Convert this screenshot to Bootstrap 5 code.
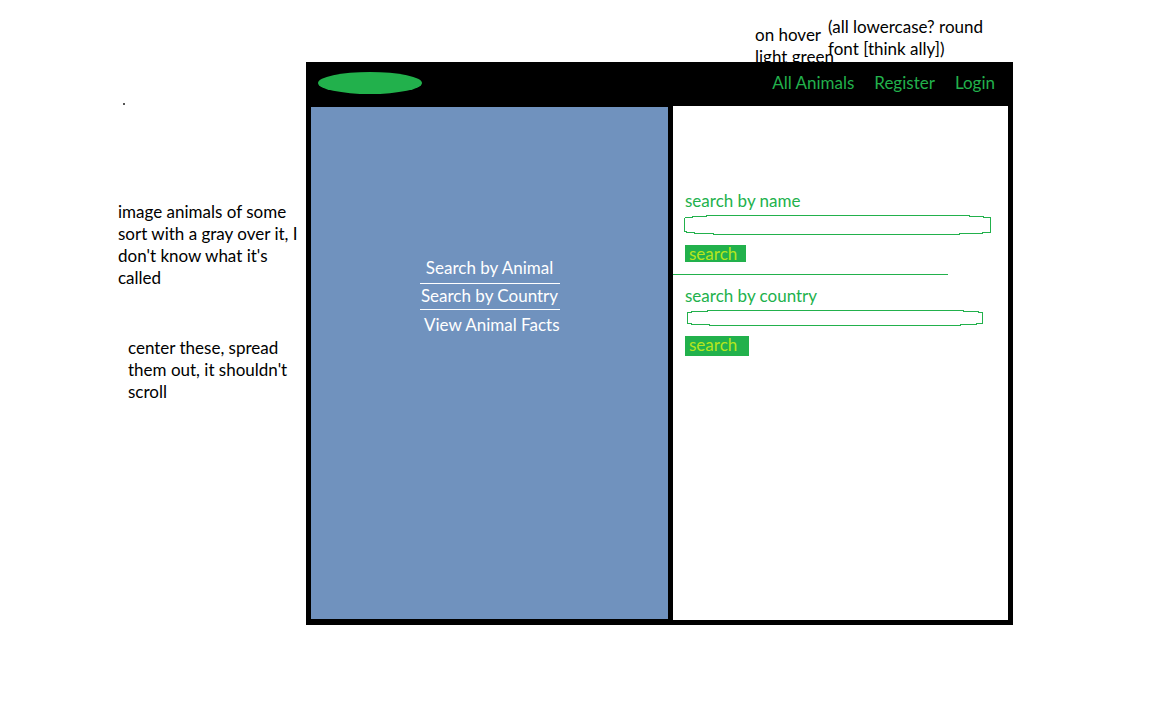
<!DOCTYPE html>
<html lang="en">
<head>
<meta charset="utf-8">
<meta name="viewport" content="width=device-width, initial-scale=1">
<title>Animal search wireframe</title>
<link href="https://cdn.jsdelivr.net/npm/bootstrap@5.3.0/dist/css/bootstrap.min.css" rel="stylesheet">
<style>
  :root { --green: #22b14c; --lime: #b5e61d; --blue: #7092be; }
  body { font-family: Lato, "Liberation Sans", sans-serif; font-size: 17px; line-height: 22px; color: #000; background: #fff; }
  a { color: inherit; text-decoration: none; }
  .board { display: grid; grid-template-columns: minmax(0, 306fr) minmax(0, 707fr) minmax(0, 139fr); grid-template-rows: 62px auto; }
  .top-notes { grid-column: 2; gap: 8px; padding-right: 28px; }
  .hover-note { width: 65px; padding-top: 24px; white-space: nowrap; }
  .font-note { width: 157px; padding-top: 16px; white-space: nowrap; }
  .side-notes { grid-column: 1; padding: 41px 8px 0 118px; }
  .dot { width: 2px; height: 2px; margin-left: 5px; background: #555; }
  .image-note { padding-top: 96px; }
  .center-note { padding: 48px 0 0 10px; }
  .image-note, .center-note { white-space: nowrap; }
  .frame { grid-column: 2; border: 5px solid #000; border-top: 0; background: #000; }
  .topbar { height: 44px; padding: 0 13px 2px 7px; color: var(--green); }
  .logo { width: 104px; height: 22px; border-radius: 50%; background: var(--green); }
  .nav-links { gap: 20px; }
  .nav-links a:hover { color: lightgreen; }
  .panels { display: grid; grid-template-columns: minmax(0, 357fr) minmax(0, 335fr); column-gap: 5px; min-height: calc(100vh - 206px); }
  .picture { background: var(--blue); color: #fff; padding-top: 150px; margin: 1px 0; }
  .picture ul { width: 140px; }
  .picture li { padding-bottom: 4px; }
  .picture li + li { border-top: 1px solid #fff; padding: 1px 0 2px; }
  .picture li:last-child { padding-top: 4px; }
  .forms { color: var(--green); padding-top: 84px; }
  .forms form { padding: 0 17px 0 12px; }
  .forms hr { width: 82%; margin: 12px 0 10px; border-top: 1px solid var(--green); opacity: 1; }
  .field { display: grid; margin: 3px 0 10px -1px; height: 20px; }
  .field.short { height: 16px; margin: 3px 8px 10px 2px; }
  .field > * { grid-area: 1 / 1; width: 100%; height: 100%; min-width: 0; }
  .field path { fill: none; stroke: var(--green); vector-effect: non-scaling-stroke; }
  .field input { border: 0; background: transparent; padding: 0 12px; font-size: 13px; line-height: 14px; color: var(--green); }
  .go { display: block; border: 0; width: 61px; height: 17px; padding: 0 0 0 4px; line-height: 17px; text-align: left; background: var(--green); color: var(--lime); }
  .go.tall { width: 64px; height: 20px; padding-bottom: 3px; }
</style>
</head>
<body>
<div class="board">
  <div class="top-notes d-flex justify-content-end overflow-hidden">
    <div class="hover-note">on hover<br>light green</div>
    <div class="font-note">(all lowercase? round<br>font [think ally])</div>
  </div>
  <aside class="side-notes">
    <div class="dot"></div>
    <div class="image-note">image animals of some<br>sort with a gray over it, I<br>don't know what it's<br>called</div>
    <div class="center-note">center these, spread<br>them out, it shouldn't<br>scroll</div>
  </aside>
  <main class="frame">
    <nav class="topbar d-flex align-items-center">
      <div class="logo me-auto"></div>
      <div class="nav-links d-flex">
        <a href="#">All Animals</a>
        <a href="#">Register</a>
        <a href="#">Login</a>
      </div>
    </nav>
    <div class="panels">
      <section class="picture">
        <ul class="list-unstyled mx-auto mb-0 text-center">
          <li><a href="#">Search by Animal</a></li>
          <li><a href="#">Search by Country</a></li>
          <li class="text-end"><a href="#">View Animal Facts</a></li>
        </ul>
      </section>
      <section class="forms bg-white">
        <form>
          <label class="d-block" for="name">search by name</label>
          <div class="field">
            <svg viewBox="0 0 307 20" preserveAspectRatio="none" shape-rendering="crispEdges" aria-hidden="true"><path d="M22 .5H285V1.5H299V2.5H306.5V17.5H298V18.5H275V19.5H29V18.5H10V17.5H2V16.5H.5V3.5L2 2.5H8V1.5H22Z"/></svg>
            <input id="name" type="text">
          </div>
          <button class="go" type="button">search</button>
        </form>
        <hr>
        <form>
          <label class="d-block" for="country">search by country</label>
          <div class="field short">
            <svg viewBox="0 0 296 16" preserveAspectRatio="none" shape-rendering="crispEdges" aria-hidden="true"><path d="M20 .5H276V1.5H291V2.5H295.5V13.5H289V14.5H273V15.5H22V14.5H4V13.5H.5V2.5H4V1.5H20Z"/></svg>
            <input id="country" type="text">
          </div>
          <button class="go tall" type="button">search</button>
        </form>
      </section>
    </div>
  </main>
</div>
<script src="https://cdn.jsdelivr.net/npm/bootstrap@5.3.0/dist/js/bootstrap.bundle.min.js"></script>
</body>
</html>
